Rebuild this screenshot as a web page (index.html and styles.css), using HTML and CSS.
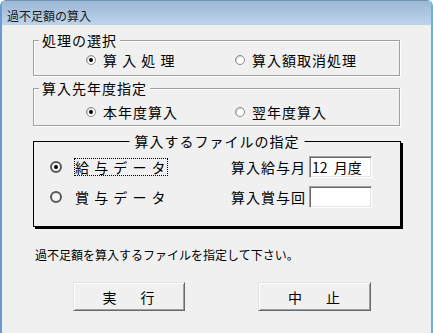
FILE: index.html
```html
<!DOCTYPE html>
<html lang="ja">
<head>
  <meta charset="UTF-8" />
  <title>過不足額の算入</title>
  <link rel="stylesheet" href="styles.css">
</head>
<body>

  <div class="window">
    <div class="titlebar">過不足額の算入</div>

    <div class="content">
      <div class="group group-proc">
        <span class="group-title">処理の選択</span>
        <div class="options">
          <label class="option"><span class="radio checked"></span>算 入 処 理</label>
          <label class="option"><span class="radio"></span>算入額取消処理</label>
        </div>
      </div>

      <div class="group group-year">
        <span class="group-title">算入先年度指定</span>
        <div class="options">
          <label class="option"><span class="radio checked"></span>本年度算入</label>
          <label class="option"><span class="radio"></span>翌年度算入</label>
        </div>
      </div>

      <div class="group-file">
        <span class="file-title">算入するファイルの指定</span>
        <div class="file-grid">
          <label class="file-option"><span class="big-radio checked"></span><span class="focus">給 与 デ ー タ</span></label>
          <span class="field-label">算入給与月</span>
          <input class="field" type="text" value="12 月度" readonly />

          <label class="file-option"><span class="big-radio"></span><span>賞 与 デ ー タ</span></label>
          <span class="field-label">算入賞与回</span>
          <input class="field" type="text" value="" readonly />
        </div>
      </div>

      <div class="message">過不足額を算入するファイルを指定して下さい。</div>

      <div class="buttons">
        <button class="btn btn-run">実　行</button>
        <button class="btn btn-stop">中　止</button>
      </div>
    </div>
  </div>

</body>
</html>
```

FILE: styles.css
```css
body {
  margin: 0;
  background-color: #fff;
  font-family: "Noto Sans CJK JP", "Liberation Sans", sans-serif;
  color: #000;
}
.window {
  width: 433px;
  height: 333px;
  box-sizing: border-box;
  overflow: hidden;
  background-color: #f0f0f0;
  border-left: 2px solid #6b9bd0;
  border-right: 2px solid #3cc4f0;
  border-radius: 6px 6px 0 0;
}
.titlebar {
  height: 25px;
  box-sizing: border-box;
  padding: 7px 0 0 5px;
  font-size: 12px;
  line-height: 16px;
  color: #1a1a1a;
  background: linear-gradient(#9cb8d6, #bdd4eb);
  border-top: 1px solid #6f93b8;
}
.content {
  padding-top: 15px;
}
.group {
  position: relative;
  width: 367px;
  margin-left: 31px;
  box-sizing: border-box;
  border: 1px solid #a0a0a0;
  box-shadow: 1px 1px 0 #fff, inset 1px 1px 0 #fff;
}
.group-proc {
  height: 36px;
  padding-top: 11px;
}
.group-year {
  height: 38px;
  margin-top: 12px;
  padding-top: 15px;
}
.group-title {
  position: absolute;
  top: -9px;
  left: 5px;
  padding: 0 3px;
  background-color: #f0f0f0;
  font-size: 14px;
  line-height: 16px;
  letter-spacing: 1px;
}
.options {
  display: flex;
  padding-left: 52px;
}
.option {
  display: flex;
  align-items: center;
  gap: 7px;
  width: 149px;
  font-size: 14px;
  line-height: 16px;
  letter-spacing: 1px;
}
.radio {
  position: relative;
  width: 10px;
  height: 10px;
  box-sizing: border-box;
  border: 1px solid #8c8c8c;
  border-radius: 50%;
  background-color: #fff;
  box-shadow: inset 1px 1px 0 #d0d0d0;
}
.radio.checked::after,
.big-radio.checked::after {
  content: "";
  position: absolute;
  top: 50%;
  left: 50%;
  width: 4px;
  height: 4px;
  margin: -2px 0 0 -2px;
  border-radius: 50%;
  background-color: #000;
}
.group-file {
  position: relative;
  width: 368px;
  height: 86px;
  margin: 15px 0 0 31px;
  box-sizing: border-box;
  border: 1px solid #000;
  box-shadow: 2px 2px 0 #000;
}
.file-title {
  position: absolute;
  top: -9px;
  left: 50%;
  transform: translateX(-50%);
  padding: 0 5px;
  background-color: #f0f0f0;
  font-size: 14px;
  line-height: 16px;
  letter-spacing: 1px;
  white-space: nowrap;
}
.file-grid {
  display: grid;
  grid-template-columns: 181px 78px 63px;
  grid-auto-rows: 22px;
  row-gap: 8px;
  align-items: center;
  padding: 14px 0 0 16px;
}
.file-option {
  display: flex;
  align-items: center;
  gap: 13px;
  font-size: 14px;
  line-height: 16px;
  letter-spacing: 1px;
}
.big-radio {
  position: relative;
  width: 12px;
  height: 12px;
  box-sizing: border-box;
  border: 2px solid #5a5a5a;
  border-radius: 50%;
  background-color: #f4f4f4;
}
.focus {
  outline: 1px dotted #000;
}
.field-label {
  font-size: 14px;
  line-height: 16px;
  letter-spacing: 1px;
}
.field {
  width: 63px;
  height: 22px;
  box-sizing: border-box;
  margin: 0;
  padding: 0 2px;
  background-color: #fff;
  border: 1px solid;
  border-color: #a0a0a0 #fff #fff #a0a0a0;
  box-shadow: inset 1px 1px 0 #696969, inset -1px -1px 0 #e3e3e3;
  font-family: "Noto Sans CJK JP", "Liberation Sans", sans-serif;
  font-size: 14px;
  word-spacing: 3px;
  color: #000;
  outline: none;
}
.message {
  margin: 20px 0 0 33px;
  font-size: 12px;
  line-height: 16px;
}
.buttons {
  display: flex;
  gap: 73px;
  margin: 19px 0 0 71px;
}
.btn {
  height: 29px;
  padding: 0 0 0 4px;
  background-color: #f0f0f0;
  border: 1px solid;
  border-color: #e3e3e3 #696969 #696969 #e3e3e3;
  box-shadow: inset 1px 1px 0 #fff, inset -1px -1px 0 #a0a0a0;
  font-family: "Noto Sans CJK JP", "Liberation Sans", sans-serif;
  font-size: 14px;
  letter-spacing: 5px;
  color: #000;
}
.btn-run {
  width: 112px;
}
.btn-stop {
  width: 113px;
}
```
